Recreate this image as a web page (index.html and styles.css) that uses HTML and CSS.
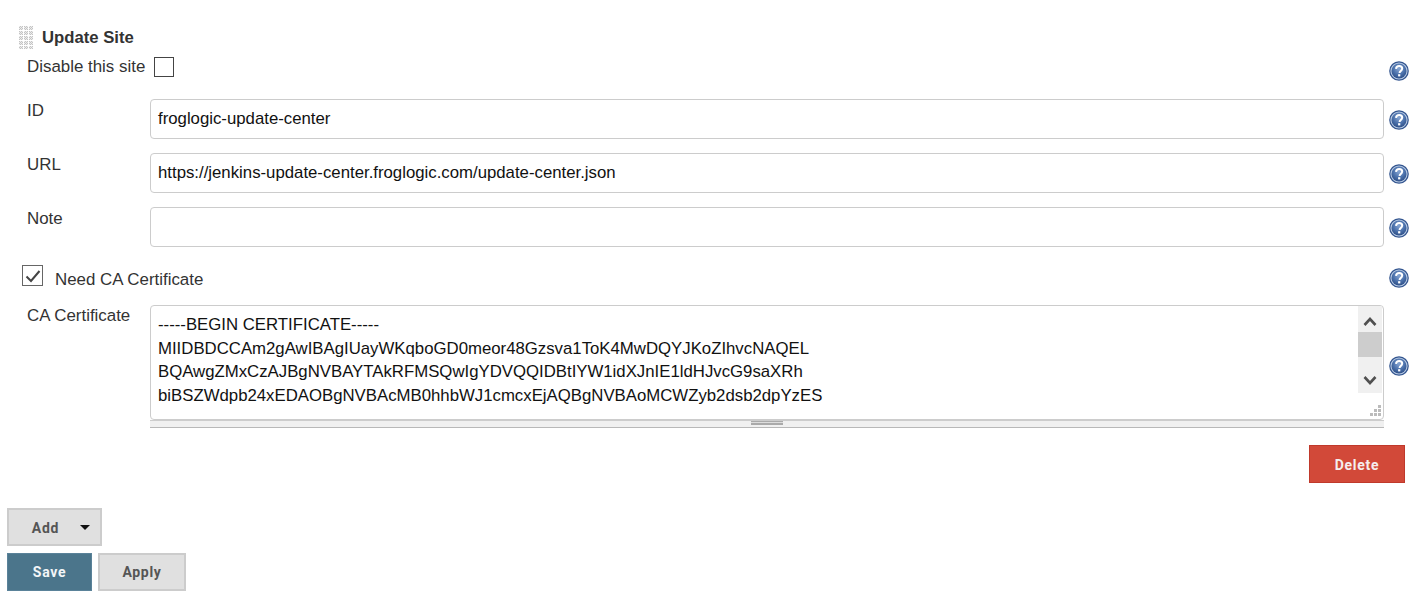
FILE: index.html
```html
<!DOCTYPE html>
<html lang="en">
<head>
<meta charset="utf-8">
<title>Update Site</title>
<link rel="stylesheet" href="styles.css">
</head>
<body>
<svg class="defs" width="0" height="0" aria-hidden="true">
  <defs>
    <radialGradient id="hg" cx="50%" cy="35%" r="65%">
      <stop offset="0" stop-color="#86a5d3"/>
      <stop offset="0.6" stop-color="#4a70aa"/>
      <stop offset="1" stop-color="#2f5088"/>
    </radialGradient>
    <symbol id="help" viewBox="0 0 20 20">
      <circle cx="10" cy="10" r="9.800" fill="#33558f"/>
      <circle cx="10" cy="10" r="8.600" fill="#b9cbe4"/>
      <circle cx="10" cy="10" r="7.500" fill="url(#hg)"/>
      <path d="M7 7.800c.2-1.700 1.500-2.800 3.200-2.800 1.800 0 3 1 3 2.600 0 1.300-.8 1.900-1.600 2.500-.7.500-1 .9-1 1.800" fill="none" stroke="#fff" stroke-width="2"/>
      <rect x="9.100" y="13.200" width="2.200" height="2.200" fill="#fff"/>
    </symbol>
  </defs>
</svg>
<form class="form">
  <div class="head">
    <span class="handle"></span>
    <b class="title">Update Site</b>
  </div>
  <div class="row row-check">
    <span class="label-inline">Disable this site</span>
    <span class="check"></span>
    <svg class="help"><use href="#help"/></svg>
  </div>
  <div class="row row-field">
    <span class="label">ID</span>
    <div class="input">froglogic-update-center</div>
    <svg class="help"><use href="#help"/></svg>
  </div>
  <div class="row row-field">
    <span class="label">URL</span>
    <div class="input">https://jenkins-update-center.froglogic.com/update-center.json</div>
    <svg class="help"><use href="#help"/></svg>
  </div>
  <div class="row row-field">
    <span class="label">Note</span>
    <div class="input"></div>
    <svg class="help"><use href="#help"/></svg>
  </div>
  <div class="row row-need">
    <span class="check check-on">
      <svg width="20" height="20" viewBox="0 0 20 20"><path d="M3.500 10.500l4.500 4.500 8.500-10" fill="none" stroke="#444" stroke-width="2"/></svg>
    </span>
    <span class="need-text">Need CA Certificate</span>
    <svg class="help"><use href="#help"/></svg>
  </div>
  <div class="row row-area">
    <span class="label">CA Certificate</span>
    <div class="area-wrap">
      <div class="area">
        <div class="area-text">-----BEGIN CERTIFICATE-----
MIIDBDCCAm2gAwIBAgIUayWKqboGD0meor48Gzsva1ToK4MwDQYJKoZIhvcNAQEL
BQAwgZMxCzAJBgNVBAYTAkRFMSQwIgYDVQQIDBtIYW1idXJnIE1ldHJvcG9saXRh
biBSZWdpb24xEDAOBgNVBAcMB0hhbWJ1cmcxEjAQBgNVBAoMCWZyb2dsb2dpYzES</div>
        <div class="scrollbar">
          <span class="arrow">
            <svg width="24" height="26" viewBox="0 0 24 26"><path d="M6.500 19l5.500-6 5.500 6" fill="none" stroke="#505050" stroke-width="2.600"/></svg>
          </span>
          <span class="thumb"></span>
          <span class="arrow">
            <svg width="24" height="36" viewBox="0 0 24 36"><path d="M6.500 20l5.500 6 5.500-6" fill="none" stroke="#505050" stroke-width="2.600"/></svg>
          </span>
        </div>
        <svg class="resize" width="12" height="12" viewBox="0 0 12 12" fill="#bbb">
          <rect x="8" y="0" width="3" height="3"/><rect x="4" y="4" width="3" height="3"/><rect x="8" y="4" width="3" height="3"/>
          <rect x="0" y="8" width="3" height="3"/><rect x="4" y="8" width="3" height="3"/><rect x="8" y="8" width="3" height="3"/>
        </svg>
      </div>
      <div class="grip"><span class="grip-handle"></span></div>
    </div>
    <svg class="help help-area"><use href="#help"/></svg>
  </div>
  <div class="delete-row">
    <button type="button" class="btn btn-delete">Delete</button>
  </div>
  <div class="add-row">
    <button type="button" class="btn btn-add">Add<span class="caret"></span></button>
  </div>
  <div class="save-row">
    <button type="button" class="btn btn-save">Save</button>
    <button type="button" class="btn btn-apply">Apply</button>
  </div>
</form>
</body>
</html>
```
FILE: styles.css
```css
html, body { margin: 0; padding: 0; background: #fff; }
body { font: 16.9px "Liberation Sans", Arial, sans-serif; color: #333; height: 596px; overflow: hidden; }
.defs { position: absolute; }
.form { display: flex; flex-direction: column; padding: 26px 0 0 7px; width: 1402px; }

.head { display: flex; align-items: flex-start; padding-left: 12px; height: 30px; }
.handle {
  width: 14px; height: 23px;
  background:
    linear-gradient(90deg, transparent 4px, #fff 4px) 0 0 / 5px 100%,
    linear-gradient(180deg, transparent 4px, #fff 4px) 0 0 / 100% 5px,
    repeating-conic-gradient(#c4c4c4 0 25%, #ececec 0 50%) 0 0 / 2px 2px;
}
.title { margin-left: 9px; font-size: 16.7px; line-height: 23px; color: #333; }

.row { display: flex; }
.help { width: 20px; height: 20px; flex: none; margin-left: 5px; }

.row-check { height: 43px; padding-left: 20px; }
.label-inline { line-height: 22px; width: 127px; flex: none; }
.row-check .check { margin-top: 1px; }
.row-check .help { margin-left: auto; margin-top: 5px; }

.check { width: 20px; height: 20px; border: 1px solid #444; box-sizing: border-box; display: block; flex: none; background: #fff; }
.check-on { width: 21px; height: 21px; border-color: #666; }
.check-on svg { display: block; }

.row-field { height: 54px; align-items: flex-start; }
.label { width: 123px; flex: none; padding-left: 20px; line-height: 22px; padding-top: 1px; }
.input {
  width: 1234px; height: 40px; box-sizing: border-box; flex: none;
  border: 1px solid #ccc; border-radius: 4px; padding: 0 7px;
  font-size: 16.77px; line-height: 37px; color: #111;
}
.row-field .help { margin-top: 11px; }

.row-need { height: 40px; padding-left: 15px; margin-top: 4px; }
.need-text { margin-left: 12px; line-height: 22px; margin-top: 4px; }
.row-need .help { margin-left: auto; margin-top: 3px; }

.row-area { height: 140px; }
.row-area .label { padding-top: 0; }
.area-wrap { width: 1234px; flex: none; }
.area {
  position: relative; display: flex; height: 115px; box-sizing: border-box;
  border: 1px solid #ccc; border-radius: 4px; overflow: hidden;
}
.area-text { flex: 1; padding: 6px 7px 0; font-size: 16.77px; line-height: 23.7px; padding-top: 7px; white-space: pre; color: #111; overflow: hidden; }
.scrollbar { width: 24px; height: 87px; margin-right: 1px; display: flex; flex-direction: column; background: #f0f0f0; flex: none; }
.arrow { display: block; height: 26px; flex: none; }
.thumb { height: 25px; background: #cdcdcd; flex: none; }
.arrow:last-child { height: 36px; }
.arrow svg { display: block; }
.resize { position: absolute; right: 1px; bottom: 2px; }
.grip { background: #f0f0f0; border-top: 1px solid #ccc; border-bottom: 1px solid #b8b8b8; display: flex; justify-content: center; height: 6px; }
.grip-handle { width: 32px; height: 4px; border-top: 1px solid #aaa; border-bottom: 2px solid #aaa; background: #ddd; box-sizing: border-box; }
.help-area { margin-top: 51px; }

.btn { font: 700 14px Roboto, "Liberation Sans", sans-serif; letter-spacing: .7px; height: 38px; box-sizing: border-box; padding: 1px 0 0; display: block; }
.delete-row { display: flex; justify-content: flex-end; height: 63px; padding-right: 4px; }
.btn-delete { width: 96px; background: #d24939; border: 1px solid #c0392b; color: #f5eeee; }
.add-row { height: 45px; }
.btn-add { position: relative; width: 95px; background: #e0e0e0; border: 2px solid #ccc; color: #555; padding-right: 18px; }
.caret { position: absolute; right: 10px; top: 15px; border: 5px solid transparent; border-top: 5px solid #111; border-bottom: 0; width: 0; height: 0; }
.save-row { display: flex; gap: 6px; }
.btn-save { width: 85px; background: #4b758b; border: 1px solid #5a8299; color: #f3f6f8; padding-top: 0; }
.btn-apply { width: 88px; background: #e0e0e0; border: 2px solid #ccc; color: #555; padding-top: 0; }
```
